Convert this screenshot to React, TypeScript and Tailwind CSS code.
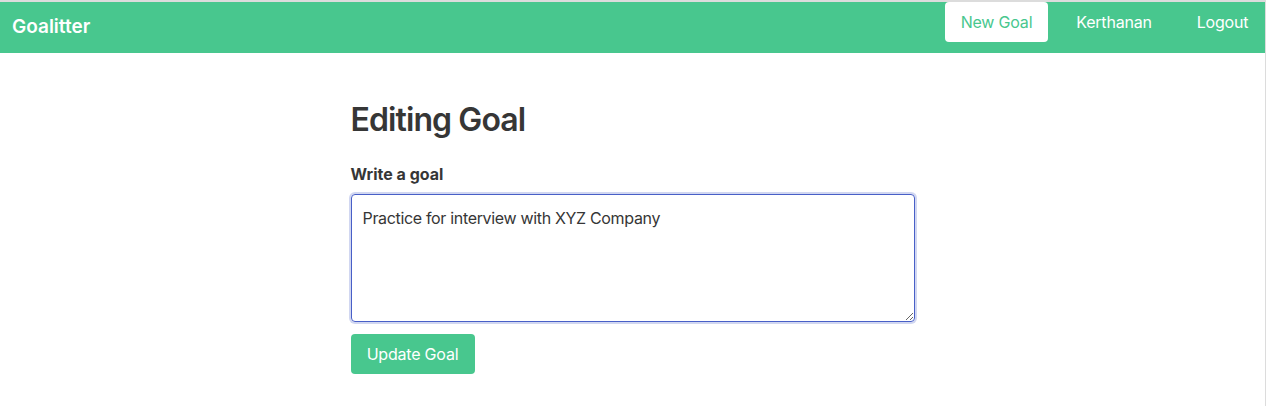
import React from 'react';

const App: React.FC = () => {
  return (
    <div
      className="w-[1266px] min-h-[406px] bg-white border-t-2 border-r border-[#dcdcdc] text-[#4a4a4a]"
      style={{ fontFamily: 'Inter, "Noto Sans", sans-serif' }}
    >
      {/* Navbar */}
      <nav className="h-[51px] bg-[#48c78e] flex items-start">
        <a className="h-[51px] flex items-center pl-3 text-white text-[19px] font-semibold">
          Goalitter
        </a>
        <div className="ml-auto flex items-start text-[16px] tracking-[-0.2px]">
          <a className="h-10 w-[103px] flex items-center justify-center bg-white text-[#48c78e] rounded-[4px]">
            New Goal
          </a>
          <a className="h-10 w-[98px] ml-[17px] flex items-center justify-center text-white">Kerthanan</a>
          <a className="h-10 w-[75px] ml-[22px] mr-[5px] flex items-center justify-center text-white">Logout</a>
        </div>
      </nav>

      {/* Main */}
      <main className="w-[564px] mx-auto pt-[49px] pb-8">
        <h1 className="text-[32px] leading-[36px] font-semibold text-[#363636] mb-6 tracking-[-0.9px]">
          Editing Goal
        </h1>
        <label className="block text-[16px] leading-6 font-bold text-[#363636] mb-2">
          Write a goal
        </label>
        <textarea
          defaultValue="Practice for interview with XYZ Company"
          className="block w-full h-[128px] rounded-[4px] border border-[#485fc7] shadow-[0_0_0_2px_rgba(72,95,199,0.25)] px-[11px] py-[11px] text-[16px] leading-6 text-[#363636] tracking-[-0.33px] outline-none"
          style={{ fontFamily: 'Inter, "Noto Sans", sans-serif' }}
        />
        <button className="mt-3 h-10 w-[124px] rounded-[4px] bg-[#48c78e] text-white text-[16px] tracking-[-0.2px]">
          Update Goal
        </button>
      </main>
    </div>
  );
};

export default App;
